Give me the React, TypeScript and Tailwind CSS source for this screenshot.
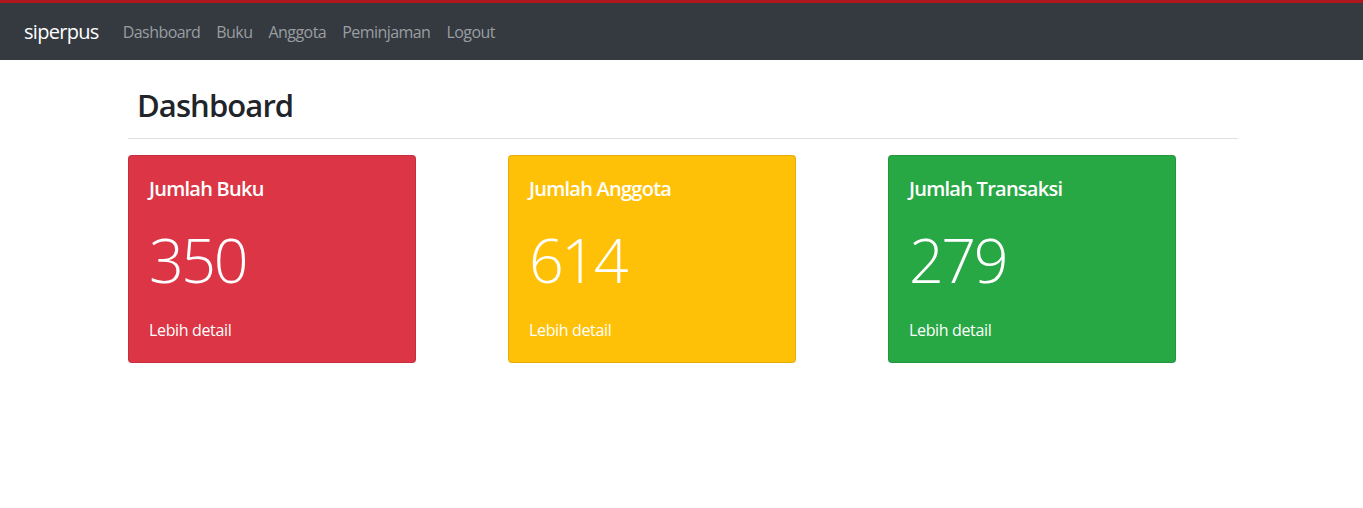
const stats = [
  { title: "Jumlah Buku", value: "350", bg: "bg-[#dc3545]" },
  { title: "Jumlah Anggota", value: "614", bg: "bg-[#ffc107]" },
  { title: "Jumlah Transaksi", value: "279", bg: "bg-[#28a745]" },
];

const links = ["Dashboard", "Buku", "Anggota", "Peminjaman", "Logout"];

const App = () => {
  return (
    <div className="min-h-[508px] bg-white font-['Open_Sans',sans-serif] text-[#212529]">
      <nav className="flex items-center h-[60px] border-t-[3px] border-[#b0161e] bg-[#343a40] px-6">
        <span className="text-[20px] text-white mr-4 leading-[30px] tracking-[-0.7px]">siperpus</span>
        <div className="flex">
          {links.map((link) => (
            <span key={link} className="px-2 text-[16px] text-[#9a9da0] leading-6 tracking-[-0.55px]">
              {link}
            </span>
          ))}
        </div>
      </nav>
      <div className="w-[1110px] ml-[128px]">
        <h1 className="pl-[9px] pt-[26px] pb-[14px] text-[31px] font-semibold leading-[38px] tracking-[-0.9px]">
          Dashboard
        </h1>
        <hr className="border-0 border-t border-[#dee2e6] mb-4" />
        <div className="flex gap-[92px]">
          {stats.map((s) => (
            <div
              key={s.title}
              className={`w-[288px] h-[208px] rounded border border-black/10 px-5 pt-[21px] pb-5 text-white ${s.bg}`}
            >
              <h5 className="text-[20px] font-semibold leading-6 mb-[11px] tracking-[-0.75px]">{s.title}</h5>
              <p className="text-[61px] font-light leading-[96px] mb-[10px] tracking-[-2.5px]">{s.value}</p>
              <p className="text-[16px] leading-6 tracking-[-0.35px]">Lebih detail</p>
            </div>
          ))}
        </div>
      </div>
    </div>
  );
};

export default App;
